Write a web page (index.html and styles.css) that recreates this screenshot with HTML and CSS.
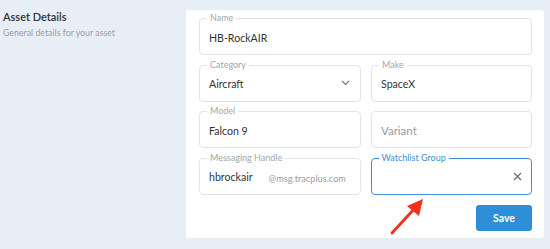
FILE: index.html
```html
<!DOCTYPE html>
<html>
<head>
<meta charset="utf-8">
<link rel="stylesheet" href="styles.css">
</head>
<body>
<div class="page">
  <div class="intro">
    <div class="title">Asset Details</div>
    <div class="subtitle">General details for your asset</div>
  </div>
  <div class="card">
    <div class="grid">
      <div class="field wide"><span class="label">Name</span><span class="value">HB-RockAIR</span></div>
      <div class="field"><span class="label">Category</span><span class="value">Aircraft</span>
        <svg class="chev" width="9" height="6" viewBox="0 0 9 6"><path d="M1 1l3.5 3.5L8 1" fill="none" stroke="#777" stroke-width="1.1"/></svg>
      </div>
      <div class="field"><span class="label">Make</span><span class="value">SpaceX</span></div>
      <div class="field"><span class="label">Model</span><span class="value">Falcon 9</span></div>
      <div class="field"><span class="value placeholder">Variant</span></div>
      <div class="field"><span class="label">Messaging Handle</span><span class="value">hbrockair</span><span class="suffix">@msg.tracplus.com</span></div>
      <div class="field active"><span class="label">Watchlist Group</span><span class="spacer"></span>
        <svg class="clear" width="9" height="9" viewBox="0 0 9 9"><path d="M1 1l7 7M8 1l-7 7" stroke="#666" stroke-width="1.1"/></svg>
      </div>
    </div>
    <div class="actions"><button class="save">Save</button></div>
  </div>
  <svg class="arrow" width="40" height="40" viewBox="0 0 40 40">
    <line x1="3" y1="37" x2="26" y2="12" stroke="#f0311d" stroke-width="2.8" stroke-linecap="round"/>
    <polygon points="34,3 30,20 18,10" fill="#f0311d"/>
  </svg>
</div>
</body>
</html>
```
FILE: styles.css
```css
html, body {
  margin: 0;
  padding: 0;
  background: #e8eef5;
}
body {
  font-family: Lato, "Noto Sans", sans-serif;
  color: #333;
}
.page {
  position: relative;
  width: 550px;
  height: 249px;
  display: flex;
  padding-top: 10px;
  box-sizing: border-box;
}
.intro {
  width: 186px;
  padding-left: 3px;
  box-sizing: border-box;
}
.title {
  font-size: 11px;
  font-weight: 600;
  color: #333;
  line-height: 14px;
}
.subtitle {
  font-size: 8.8px;
  color: #9a9ea3;
  margin-top: 3px;
  line-height: 12px;
}
.card {
  width: 358px;
  height: 228px;
  background: #fff;
  border-radius: 3px;
  box-sizing: border-box;
  padding: 8px 12px 9px 13px;
  display: flex;
  flex-direction: column;
}
.grid {
  display: grid;
  grid-template-columns: 162px 161px;
  column-gap: 10px;
  grid-auto-rows: 37px;
  row-gap: 9.5px;
}
.wide {
  grid-column: 1 / 3;
}
.field {
  position: relative;
  border: 1px solid #dde6f0;
  border-radius: 4px;
  display: flex;
  align-items: center;
  padding: 0 9px;
  box-sizing: border-box;
}
.field.active {
  border: 1.5px solid #3f8fd4;
}
.label {
  position: absolute;
  top: -7px;
  left: 7px;
  padding: 0 3px;
  background: #fff;
  font-size: 9px;
  line-height: 12px;
  color: #a3a7ab;
}
.active .label {
  color: #3f8fd4;
  left: 6.5px;
}
.value {
  font-size: 10.6px;
  color: #333;
  padding-top: 2px;
}
.placeholder {
  color: #999;
  font-size: 11.5px;
}
.suffix {
  font-size: 9.2px;
  color: #9a9ea3;
  margin-left: 16px;
  padding-top: 4px;
}
.spacer {
  flex: 1;
}
.chev {
  margin-left: auto;
  margin-right: 1px;
}
.clear {
  margin-right: 0px;
}
.actions {
  display: flex;
  justify-content: flex-end;
  margin-top: 10px;
}
.save {
  width: 56px;
  height: 26px;
  border: none;
  border-radius: 3px;
  background: #2f8fd6;
  color: #fff;
  font-family: Lato, "Noto Sans", sans-serif;
  font-weight: 700;
  font-size: 10.5px;
}
.arrow {
  position: absolute;
  left: 389px;
  top: 196px;
}
```
